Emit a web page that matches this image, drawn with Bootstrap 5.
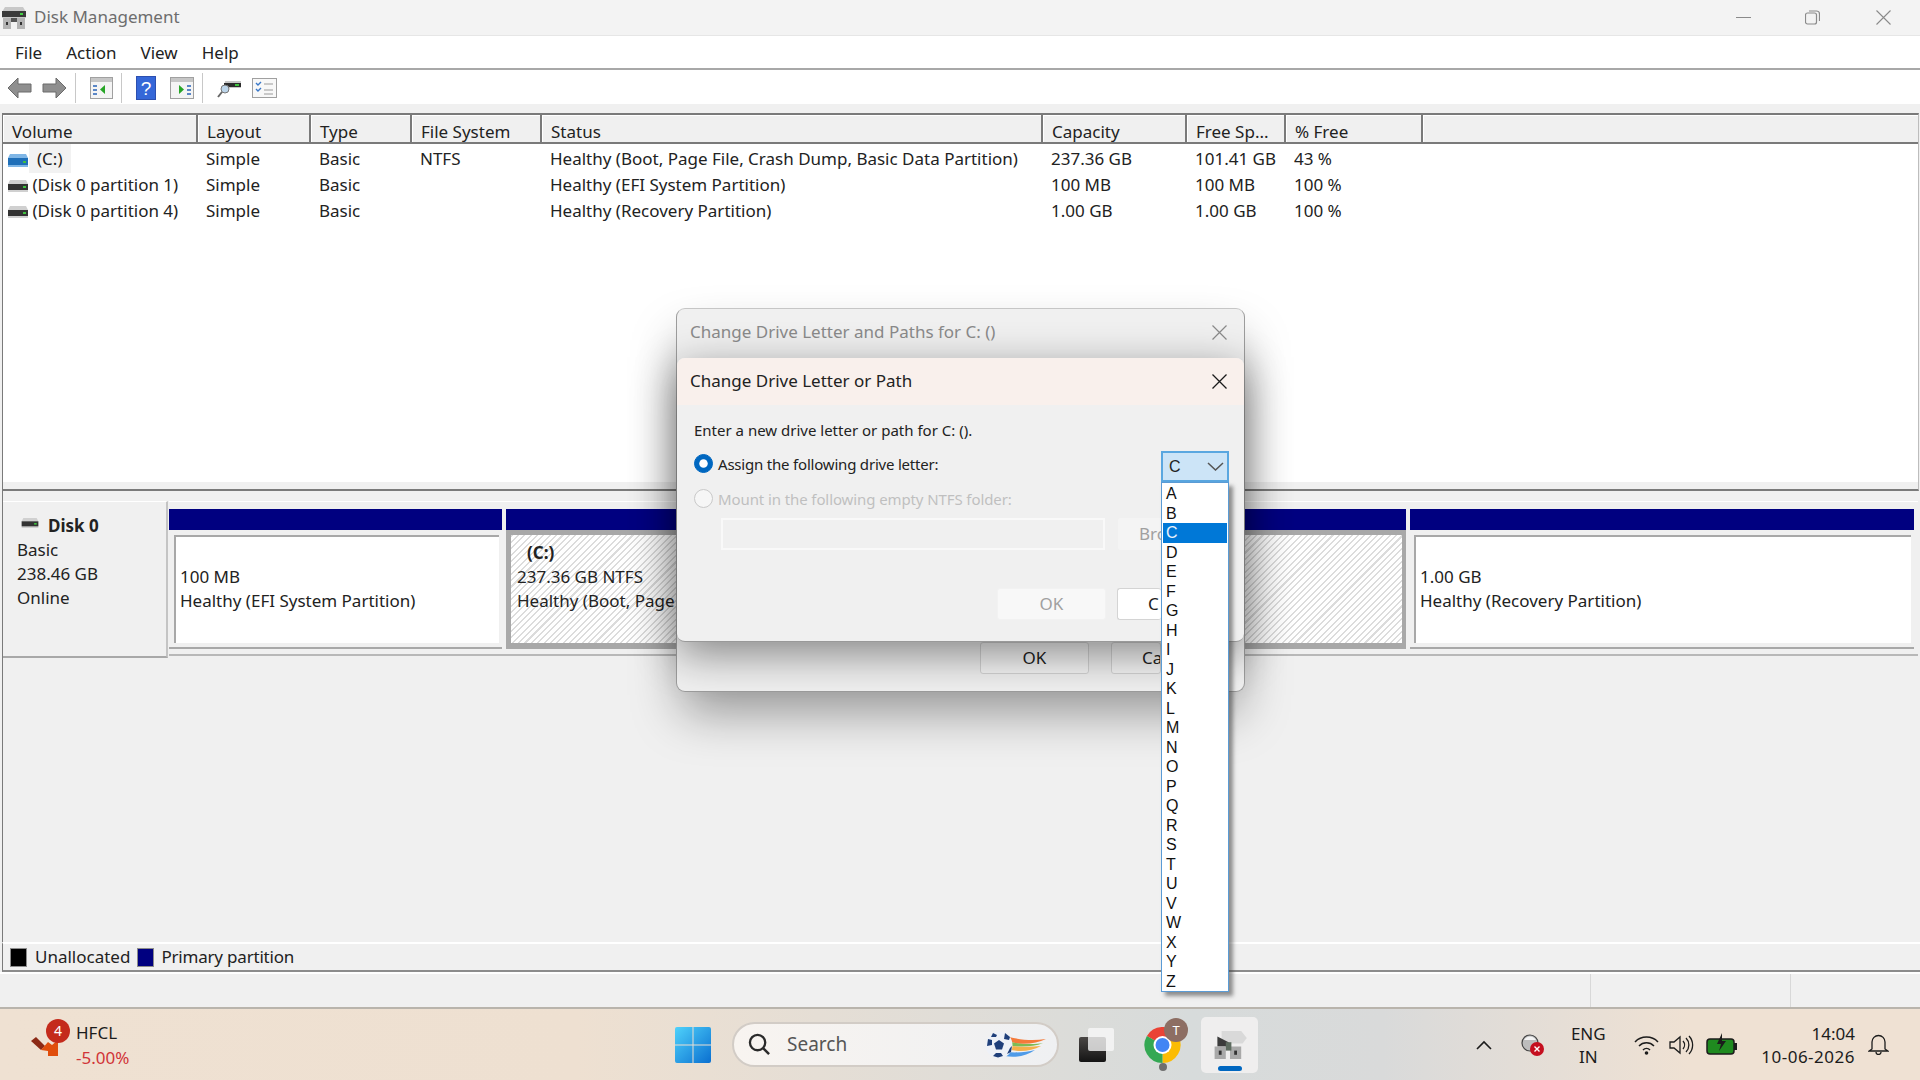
<!DOCTYPE html>
<html lang="en">
<head>
<meta charset="UTF-8">
<title>Disk Management</title>
<link rel="stylesheet" href="https://cdn.jsdelivr.net/npm/bootstrap@5.3.0/dist/css/bootstrap.min.css">
<style>
  html, body { height: 1080px; overflow: hidden; }
  body { font-family: "Noto Sans", "Liberation Sans", sans-serif; font-size: 17px; color: #222; background: #f0f0f0; line-height: 1.2; }
  .mm-title { height: 36px; background: #f3f3f3; border-bottom: 1px solid #e6e6e6; color: #6d6d6d; }
  .mm-title svg.app-ico { margin-left: 2px; margin-right: 8px; }
  .win-ctl { width: 15px; height: 15px; }
  .mm-menu { height: 34px; background: #fff; border-bottom: 2px solid #a8a8a8; padding: 2px 0 0 15px; gap: 24px; }
  .mm-menu .nav-link { padding: 0; color: #222; }
  .mm-tools { height: 34px; background: #fff; padding: 2px 0 0 7px; }
  .tb-sep { width: 1px; height: 30px; background: #c8c8c8; margin-left: 8px; }
  .tb-m10 { margin-left: 10px; } .tb-m14 { margin-left: 14px; }
  .tools-gap { height: 9px; }
  .vol-pane { height: 378px; margin: 0 1px 0 2px; background: #fff; border-top: 2px solid #7a7a7a; border-left: 1px solid #7a7a7a; border-right: 1px solid #bdbdbd; border-bottom: 2px solid #7a7a7a; box-shadow: inset 0 -7px 0 #f0f0f0; }
  .vol-table { table-layout: fixed; width: 100%; margin: 0; --bs-table-bg: transparent; }
  .vol-table th { font-weight: 400; height: 28px; padding: 3px 0 0 9px; background: #f0f0f0; border-right: 2px solid #7a7a7a; border-bottom: 2px solid #7a7a7a; box-shadow: inset 1px 1px 0 #fff; color: #222; }
  .vol-table th:last-child { border-right: 0; }
  .vol-table td { height: 26px; padding: 2px 0 0 9px; color: #222; white-space: nowrap; vertical-align: middle; }
  .vol-table tbody tr:first-child td { height: 28px; padding-top: 4px; }
  .vol-table td:first-child { padding-left: 5px; }
  .c1 { width: 194px; } .c2 { width: 113px; } .c3 { width: 101px; } .c4 { width: 130px; } .c5 { width: 501px; } .c6 { width: 144px; } .c7 { width: 99px; } .c8 { width: 137px; }
  .sel-name { background: #f2f2f2; padding: 3px 8px; margin-left: 1px; }
  .lower-pane { height: 451px; margin-left: 2px; border-left: 1px solid #7a7a7a; padding-top: 10px; }
  .disk-label { width: 165px; height: 157px; background: #f0f0f0; border-top: 1px solid #fff; border-right: 2px solid #c4c4c4; border-bottom: 2px solid #a8a8a8; padding: 12px 0 0 14px; flex: none; }
  .disk-label .lbl-row { height: 24px; line-height: 24px; }
  .lbl-ico { margin: 0 8px 7px 3px; }
  .disk-parts { height: 155px; margin: 0 2px 0 1px; border-top: 1px solid #fff; border-bottom: 2px solid #b8b8b8; padding: 7px 4px 0 0; }
  .part-col { flex: none; margin-right: 4px; }
  .col-efi { width: 333px; } .col-sys { width: 900px; } .col-rec { flex: 1 1 0; margin-right: 0; }
  .col-rec .part-box { padding-left: 4px; }
  .part-bar { height: 21px; background: #000080; }
  .part-box { height: 119px; padding: 5px 3px 0 5px; border-bottom: 2px solid #a8a8a8; }
  .part-box.part-sel { background: #a8a8a8; padding: 5px 4px 0 5px; border-bottom: 0; }
  .part-inner { height: 108px; background: #fff; border-top: 2px solid #a8a8a8; border-left: 2px solid #a8a8a8; padding: 28px 0 0 4px; line-height: 24px; white-space: nowrap; overflow: hidden; }
  .part-hatch { border: 0; padding: 6px 0 0 6px; background: repeating-linear-gradient(135deg, #dcdcdc 0 1.5px, #fff 1.5px 4.5px); }
  .part-hatch b { display: block; padding-left: 10px; }
  .legend-bar { height: 30px; border-top: 2px solid #fff; border-bottom: 2px solid #8c8c8c; margin-left: 2px; border-left: 1px solid #7a7a7a; padding-left: 7px; }
  .legend-bar span { margin-top: 1px; }
  .legend-sq { width: 17px; height: 19px; border: 1px solid #8c8c8c; flex: none; }
  .legend-navy { background: #000080; margin-left: 7px; }
  .legend-tight { letter-spacing: -.2px; margin-left: 7px; }
  .status-strip { height: 37px; border-top: 2px solid #fff; border-bottom: 2px solid #b9b4ac; }
  .status-cell { border-left: 1px solid #d8d8d8; }
  .st-a { width: 200px; } .st-b { width: 130px; }
  /* taskbar */
  .task-bar { height: 71px; background: linear-gradient(90deg, #efe1d2 0, #eee0d1 30%, #d7dbdb 62%, #d9dada 72%, #efe1d3 88%, #efe1d3 100%); }
  .tk-left { width: 675px; padding-left: 30px; flex: none; }
  .tk-check { margin: -14px 10px 0 0; }
  .tk-badge { position: absolute; border-radius: 50%; color: #fff; text-align: center; }
  .tk-badge-red { width: 24px; height: 24px; line-height: 24px; left: 16px; top: -1px; background: #c42b1c; font-size: 14px; }
  .tk-badge-tan { width: 24px; height: 24px; line-height: 24px; left: 20px; top: -9px; background: #8d6e63; font-size: 13px; }
  .tk-name { color: #1c1c1c; line-height: 25px; }
  .tk-loss { color: #d13438; line-height: 25px; }
  .tk-search { width: 327px; height: 45px; margin-left: 21px; background: linear-gradient(90deg, #f8f4f0, #eff0f2); border-radius: 24px; border: 2px solid #d2ccc6; color: #555; padding: 0 10px 0 14px; font-size: 19px; }
  .tk-tile { width: 57px; height: 56px; background: #efeeee; border-radius: 5px; margin-left: 20px; }
  .tk-pill { position: absolute; width: 24px; height: 5px; border-radius: 3px; background: #0067c0; left: 17px; bottom: 2px; }
  .tk-dot { position: absolute; width: 8px; height: 8px; border-radius: 50%; background: #6f6f6f; left: 15px; bottom: -8px; }
  .tray-lang { text-align: center; line-height: 23px; margin-left: 26px; width: 36px; color: #1c1c1c; }
  .tray-clock { text-align: right; line-height: 23px; margin-left: 24px; color: #1c1c1c; }
  .tray-date { letter-spacing: .5px; }
  /* dialogs */
  .dlg-back { position: absolute; left: 676px; top: 308px; width: 569px; height: 384px; background: #f0f0f0; border: 1px solid #9c9c9c; border-top-color: #c6c6c6; border-radius: 9px; box-shadow: 0 26px 50px -6px rgba(0,0,0,.38); }
  .dlg-back-title { height: 48px; padding: 0 13px 2px; color: #8a8a8a; border-radius: 9px 9px 0 0; }
  .dlg-btn { width: 109px; height: 32px; padding: 0; border-radius: 3px; font-size: 17px; color: #222; }
  .dlg-back-btns { position: absolute; left: 303px; top: 333px; gap: 22px; }
  .dlg-back-btns .dlg-btn { background: #f6f6f6; border: 1px solid #d4d4d4; }
  .dlg-back-btns .btn-clip { width: 50px; padding-left: 30px; }
  .btn-clip { text-align: left; white-space: nowrap; overflow: hidden; }
  .dlg-front { position: absolute; left: 0; top: 49px; width: 567px; height: 284px; background: #f0f0f0; border-bottom: 1px solid #999; border-radius: 8px; box-shadow: 0 12px 44px rgba(0,0,0,.45); }
  .dlg-front-title { height: 47px; padding: 0 13px; background: #f9f0ec; border-radius: 8px 8px 0 0; color: #222; }
  .dlg-x { margin-right: 4px; }
  .dlg-front-body { padding: 16px 0 0 17px; font-size: 15px; letter-spacing: -.2px; color: #222; }
  .dlg-intro { letter-spacing: 0; margin-bottom: 15px; }
  .dlg-radio { min-height: 0; padding: 0; margin: 0; }
  .dlg-radio .form-check-input { float: none; width: 19px; height: 19px; margin: 0 5px 0 0; flex: none; background-color: #f6f6f6; border: 1px solid #c9c9c9; }
  .dlg-radio .form-check-input:checked { background-color: #0067c0; border-color: #0067c0; }
  .dlg-radio .form-check-input:disabled { opacity: 1; }
  .dlg-radio .form-check-label { opacity: 1; }
  .lbl-off { color: #909090 !important; letter-spacing: -.1px; }
  .combo-box { position: absolute; left: 484px; top: 93px; width: 68px; height: 31px; background: #cce4f7; border: 2px solid #5aa7e0; font-family: "Liberation Sans", sans-serif; font-size: 16px; letter-spacing: 0; padding: 0 3px 0 6px; }
  .combo-list { position: absolute; left: 484px; top: 124px; width: 68px; height: 510px; min-width: 0; padding: 1px 1px; margin: 0; background: #fff; border: 1px solid #5a9bd5; border-radius: 0; box-shadow: 4px 4px 4px rgba(60,60,60,.55); font-family: "Liberation Sans", sans-serif; font-size: 16px; letter-spacing: 0; }
  .combo-list .dropdown-item { height: 19.5px; line-height: 19.5px; padding: 0 0 0 3px; color: #111; }
  .combo-list .dropdown-item.active { background: #0078d7; color: #e8f2fb; }
  .folder-row { margin: 10px 0 0 27px; gap: 13px; }
  .folder-input { width: 384px; height: 32px; flex: none; background: #f0f0f0 !important; border: 2px solid #f9f9f9; border-radius: 0; }
  .btn-browse { width: 43px; height: 32px; padding: 0 0 0 21px; border: 0; font-size: 17px; letter-spacing: 0; border-radius: 3px 0 0 3px; text-align: left; white-space: nowrap; overflow: hidden; }
  .btn-browse:disabled { background: #f4f4f4; color: #a0a0a0; opacity: 1; }
  .dlg-front-btns { margin: 38px 0 0 303px; gap: 11px; }
  .btn-okoff:disabled { background: #f8f8f8; border: 1px solid #f2f2f2; color: #a0a0a0; letter-spacing: 0; opacity: 1; }
  .btn-cancel { width: 44px; padding-left: 30px; background: #fff; border: 1px solid #d4d4d4; border-right: 0; letter-spacing: 0; }
</style>
</head>
<body>
<svg width="0" height="0" class="position-absolute">
  <symbol id="disk-gray" viewBox="0 0 20 12"><path d="M2 0h16l2 4v8H0V4z" fill="#d0d0d0"/><rect y="4" width="20" height="6" fill="#333"/><rect x="15" y="6" width="3" height="2" fill="#3fc23f"/></symbol>
  <symbol id="disk-blue" viewBox="0 0 20 13"><path d="M2 0h16l2 4v9H0V4z" fill="#7fb6e6"/><rect y="4" width="20" height="7" fill="#1f6fb8"/><rect x="15" y="7" width="3" height="2" fill="#3fc23f"/></symbol>
  <symbol id="app-mgr" viewBox="0 0 24 22"><path d="M3 0h18l3 5v6H0V5z" fill="#c8c8c8"/><rect x="0" y="4" width="24" height="6" fill="#3a3a3a"/><rect x="18" y="6" width="3" height="2" fill="#43d043"/><path d="M1 11h8v11H1zM15 11h8v11h-8z" fill="#b4b4b4"/><path d="M9 11h6v4H9z" fill="#555"/><rect x="4" y="15" width="2" height="3" fill="#333"/><rect x="18" y="15" width="2" height="3" fill="#333"/></symbol>
</svg>

<header class="mm-title d-flex align-items-center">
  <svg class="app-ico" width="24" height="22"><use href="#app-mgr"/></svg>
  <span>Disk Management</span>
  <div class="ms-auto d-flex align-items-center">
    <svg class="win-ctl" viewBox="0 0 15 15"><path d="M0 7.5h15" stroke="#8a8a8a" stroke-width="1"/></svg>
    <svg class="win-ctl" viewBox="0 0 15 15" style="margin-left:54px"><rect x=".5" y="3" width="11" height="11" rx="2" fill="none" stroke="#8a8a8a" stroke-width="1.2"/><path d="M4 1h7.5a3 3 0 0 1 3 3v7" fill="none" stroke="#8a8a8a" stroke-width="1.2"/></svg>
    <svg class="win-ctl" viewBox="0 0 15 15" style="margin:0 29px 0 56px"><path d="M.5.5l14 14M14.5.5l-14 14" stroke="#8a8a8a" stroke-width="1.1"/></svg>
  </div>
</header>

<nav class="mm-menu nav align-items-center">
  <a class="nav-link" href="#">File</a>
  <a class="nav-link" href="#">Action</a>
  <a class="nav-link" href="#">View</a>
  <a class="nav-link" href="#">Help</a>
</nav>

<div class="mm-tools d-flex align-items-center">
  <svg width="25" height="22" viewBox="0 0 25 22"><path d="M11 1L1 11l10 10v-6h13V7H11z" fill="#8f8f8f" stroke="#6a6a6a"/></svg>
  <svg class="tb-m10" width="25" height="22" viewBox="0 0 25 22"><path d="M14 1l10 10-10 10v-6H1V7h13z" fill="#8f8f8f" stroke="#6a6a6a"/></svg>
  <span class="tb-sep"></span>
  <svg class="tb-m14" width="23" height="22" viewBox="0 0 23 22"><rect x=".5" y=".5" width="22" height="21" fill="#f4f4f4" stroke="#a0a0a0"/><rect x="1" y="1" width="21" height="4" fill="#c6c6c6"/><path d="M3 8h4v2H3zM3 12h4v2H3zM3 16h4v2H3z" fill="#5a86c6"/><path d="M15 8v9l-5-4.500z" fill="#27a527"/></svg>
  <span class="tb-sep"></span>
  <svg class="tb-m14" width="20" height="24" viewBox="0 0 20 24"><rect width="20" height="24" fill="#2c4fb0"/><rect x="1" y="1" width="18" height="22" fill="#3567d8"/><text x="10" y="19" font-size="19" font-family="Liberation Sans" fill="#fff" text-anchor="middle">?</text></svg>
  <svg class="tb-m14" width="24" height="22" viewBox="0 0 24 22"><rect x=".5" y=".5" width="23" height="21" fill="#f4f4f4" stroke="#a0a0a0"/><rect x="1" y="1" width="22" height="4" fill="#c6c6c6"/><path d="M17 8h4v2h-4zM17 12h4v2h-4zM17 16h4v2h-4z" fill="#5a86c6"/><path d="M9 8v9l5-4.500z" fill="#27a527"/></svg>
  <span class="tb-sep"></span>
  <svg class="tb-m14" width="25" height="22" viewBox="0 0 25 22"><path d="M8 4h16v7H7z" fill="#c7c7c7"/><rect x="7" y="6" width="17" height="4" fill="#2c2c2c"/><rect x="18" y="7" width="4" height="2" fill="#3fc23f"/><circle cx="8" cy="12" r="4" fill="#bcd5ea" stroke="#777"/><path d="M5 15l-4 5" stroke="#666" stroke-width="2"/></svg>
  <svg class="tb-m10" width="25" height="20" viewBox="0 0 25 20"><rect x=".5" y=".5" width="24" height="19" fill="#f8f8f8" stroke="#a0a0a0"/><path d="M4 5l2 2 3-3M4 11l2 2 3-3" fill="none" stroke="#3a78c8" stroke-width="1.400"/><path d="M12 6h9M12 12h9M12 16h9" stroke="#9a9a9a"/></svg>
</div>
<div class="tools-gap"></div>

<section class="vol-pane">
  <table class="table table-borderless vol-table">
    <colgroup><col class="c1"><col class="c2"><col class="c3"><col class="c4"><col class="c5"><col class="c6"><col class="c7"><col class="c8"><col></colgroup>
    <thead>
      <tr><th>Volume</th><th>Layout</th><th>Type</th><th>File System</th><th>Status</th><th>Capacity</th><th>Free Sp...</th><th>% Free</th><th></th></tr>
    </thead>
    <tbody>
      <tr><td><svg width="20" height="13"><use href="#disk-blue"/></svg><span class="sel-name">(C:)</span></td><td>Simple</td><td>Basic</td><td>NTFS</td><td>Healthy (Boot, Page File, Crash Dump, Basic Data Partition)</td><td>237.36 GB</td><td>101.41 GB</td><td>43 %</td><td></td></tr>
      <tr><td><svg width="20" height="12"><use href="#disk-gray"/></svg> (Disk 0 partition 1)</td><td>Simple</td><td>Basic</td><td></td><td>Healthy (EFI System Partition)</td><td>100 MB</td><td>100 MB</td><td>100 %</td><td></td></tr>
      <tr><td><svg width="20" height="12"><use href="#disk-gray"/></svg> (Disk 0 partition 4)</td><td>Simple</td><td>Basic</td><td></td><td>Healthy (Recovery Partition)</td><td>1.00 GB</td><td>1.00 GB</td><td>100 %</td><td></td></tr>
    </tbody>
  </table>
</section>

<section class="lower-pane d-flex align-items-start">
  <div class="disk-label">
    <div class="lbl-row d-flex align-items-center"><svg class="lbl-ico" width="20" height="10"><use href="#disk-gray"/></svg><b>Disk 0</b></div>
    <div class="lbl-row">Basic</div>
    <div class="lbl-row">238.46 GB</div>
    <div class="lbl-row">Online</div>
  </div>
  <div class="disk-parts d-flex flex-grow-1">
    <div class="part-col col-efi">
      <div class="part-bar"></div>
      <div class="part-box"><div class="part-inner">100 MB<br>Healthy (EFI System Partition)</div></div>
    </div>
    <div class="part-col col-sys">
      <div class="part-bar"></div>
      <div class="part-box part-sel"><div class="part-inner part-hatch"><b>(C:)</b>237.36 GB NTFS<br>Healthy (Boot, Page</div></div>
    </div>
    <div class="part-col col-rec">
      <div class="part-bar"></div>
      <div class="part-box"><div class="part-inner">1.00 GB<br>Healthy (Recovery Partition)</div></div>
    </div>
  </div>
</section>

<div class="legend-bar d-flex align-items-center">
  <span class="legend-sq bg-black"></span><span class="ms-2">Unallocated</span>
  <span class="legend-sq legend-navy"></span><span class="legend-tight">Primary partition</span>
</div>

<div class="status-strip d-flex justify-content-end">
  <div class="status-cell st-a"></div>
  <div class="status-cell st-b"></div>
</div>

<footer class="task-bar d-flex align-items-center">
  <div class="tk-left d-flex align-items-center">
    <div class="position-relative tk-check">
      <svg class="d-block" width="36" height="36" viewBox="0 0 36 36"><path d="M1 21l5-4 9 9-4 4z" fill="#8c2a16"/><path d="M11 30l7-8 4 3 6-5v16H18v-5z" fill="#e04e0c"/></svg>
      <span class="tk-badge tk-badge-red">4</span>
    </div>
    <div><div class="tk-name">HFCL</div><div class="tk-loss">-5.00%</div></div>
  </div>
  <svg width="36" height="36" viewBox="0 0 36 36">
    <defs><linearGradient id="win" x1="0" y1="0" x2="1" y2="1"><stop offset="0" stop-color="#4fd2fb"/><stop offset="1" stop-color="#0a6fd0"/></linearGradient></defs>
    <path d="M2 0h15.500v17.500H0V2a2 2 0 0 1 2-2zM18.500 0H34a2 2 0 0 1 2 2v15.500H18.500zM0 18.500h17.500V36H2a2 2 0 0 1-2-2zM18.500 18.500H36V34a2 2 0 0 1-2 2H18.500z" fill="url(#win)"/>
  </svg>
  <div class="tk-search d-flex align-items-center">
    <svg class="me-2" width="23" height="23" viewBox="0 0 24 24"><circle cx="10" cy="10" r="8" fill="none" stroke="#2a2a2a" stroke-width="2.400"/><path d="M16 16l6 6" stroke="#2a2a2a" stroke-width="2.600"/></svg>
    <span class="ms-2">Search</span>
    <svg class="ms-auto" width="62" height="28" viewBox="0 0 62 28">
      <path d="M24 6c12 3 24 4 37 2-10 5-24 6-36 3z" fill="#f47a3a"/>
      <path d="M26 11c10 2 22 3 32 1-9 4-22 4-32 3z" fill="#7dbb55"/>
      <path d="M26 15c10 1 20 1 30 0-9 5-20 6-30 4z" fill="#f5b04a"/>
      <path d="M22 21c10 1 20 0 28-2-8 6-20 8-30 6z" fill="#4f9be8"/>
      <circle cx="14" cy="14" r="13.500" fill="#eef1f7"/>
      <path d="M14 9l5 3.500-2 6h-6l-2-6z" fill="#1f3f7a"/>
      <path d="M3 8l4 1 0 5-5 1zM20 2l5 4-1 3-5-1zM8 2l4 2-1 2-5 0zM25 17l2-2-1 6-4 2zM8 25l3-3h5l2 3-5 1.500z" fill="#1f3f7a"/>
    </svg>
  </div>
  <svg style="margin-left:20px" width="36" height="34" viewBox="0 0 36 34"><defs><linearGradient id="tkd" x1="0" y1="0" x2="0" y2="1"><stop offset="0" stop-color="#4a4745"/><stop offset="1" stop-color="#141414"/></linearGradient></defs><rect x="0" y="9" width="27" height="25" rx="2" fill="url(#tkd)"/><rect x="9" y="0" width="26" height="23" rx="2" fill="#f8f8f8" fill-opacity=".78"/></svg>
  <div class="position-relative" style="margin-left:29px">
    <svg class="d-block" width="37" height="36" viewBox="0 0 36 36"><path d="M18 18L2.400 9A18 18 0 0 1 33.600 9z" fill="#ea4335"/><path d="M18 18L33.600 9A18 18 0 0 1 18 36z" fill="#fbbc04"/><path d="M18 18L18 36A18 18 0 0 1 2.400 9z" fill="#34a853"/><circle cx="18" cy="18" r="9" fill="#fff"/><circle cx="18" cy="18" r="7" fill="#4285f4"/></svg>
    <span class="tk-badge tk-badge-tan">T</span>
    <span class="tk-dot"></span>
  </div>
  <div class="tk-tile position-relative d-flex align-items-center justify-content-center">
    <svg width="36" height="28" viewBox="0 0 24 20"><path d="M6 0h14l4 5-3 4H6z" fill="#d9d9d9"/><path d="M3 4l8 4v3H3z" fill="#3b3b3b"/><path d="M1 11h8v9H1zM12 11h8v9h-8z" fill="#a9a9a9"/><path d="M9 8h4v6H9z" fill="#5d6b5f"/><rect x="4" y="14" width="2" height="3" fill="#333"/><rect x="15" y="14" width="2" height="3" fill="#333"/></svg>
    <span class="tk-pill"></span>
  </div>
  <svg class="ms-auto" width="16" height="10" viewBox="0 0 16 10"><path d="M1 9l7-7 7 7" fill="none" stroke="#1c1c1c" stroke-width="1.600"/></svg>
  <svg style="margin-left:28px" width="24" height="22" viewBox="0 0 24 22"><circle cx="10" cy="9" r="8" fill="#bdbdbd" stroke="#444" stroke-width="1.200"/><path d="M4 6a7 7 0 0 1 12 0" fill="#f4f4f4"/><circle cx="17" cy="15" r="7" fill="#c50f1f"/><path d="M14.500 12.500l5 5M19.500 12.500l-5 5" stroke="#fff" stroke-width="1.400"/></svg>
  <div class="tray-lang">ENG<br>IN</div>
  <svg style="margin-left:28px" width="25" height="20" viewBox="0 0 25 20"><path d="M1 7a16 16 0 0 1 23 0M5 11a10.500 10.500 0 0 1 15 0M9 15a5 5 0 0 1 7 0" fill="none" stroke="#1c1c1c" stroke-width="1.500"/><circle cx="12.500" cy="18" r="1.800" fill="#1c1c1c"/></svg>
  <svg class="tb-m10" width="25" height="22" viewBox="0 0 25 22"><path d="M1 8h4l6-5v16l-6-5H1z" fill="none" stroke="#1c1c1c" stroke-width="1.300"/><path d="M14 7a6 6 0 0 1 0 8M17 4a10 10 0 0 1 0 14M20 2a13 13 0 0 1 0 18" fill="none" stroke="#1c1c1c" stroke-width="1.300"/></svg>
  <svg style="margin-left:12px" width="31" height="24" viewBox="0 0 31 24"><rect x="1" y="6" width="27" height="15" rx="3" fill="#1f8a1f" stroke="#1c1c1c" stroke-width="1.500"/><rect x="28" y="10" width="3" height="7" fill="#1c1c1c"/><path d="M16 0l-5 11h4l-2 7 7-10h-4z" fill="#1c1c1c"/></svg>
  <div class="tray-clock">14:04<br><span class="tray-date">10-06-2026</span></div>
  <svg style="margin:0 31px 0 13px" width="21" height="21" viewBox="0 0 21 21"><path d="M4 15V8a6.500 6.500 0 0 1 13 0v7l3 2H1zM8 18a2.500 2.500 0 0 0 5 0" fill="none" stroke="#1c1c1c" stroke-width="1.300"/></svg>
</footer>

<div class="dlg-back">
  <div class="dlg-back-title d-flex align-items-center justify-content-between">
    <span>Change Drive Letter and Paths for C: ()</span>
    <svg class="dlg-x" width="15" height="15" viewBox="0 0 15 15"><path d="M.5.5l14 14M14.500.5l-14 14" stroke="#8a8a8a" stroke-width="1.200"/></svg>
  </div>
  <div class="dlg-back-btns d-flex">
    <button class="btn dlg-btn">OK</button>
    <button class="btn dlg-btn btn-clip">Ca</button>
  </div>
  <div class="dlg-front">
    <div class="dlg-front-title d-flex align-items-center justify-content-between">
      <span>Change Drive Letter or Path</span>
      <svg class="dlg-x" width="15" height="15" viewBox="0 0 15 15"><path d="M.5.5l14 14M14.500.5l-14 14" stroke="#1a1a1a" stroke-width="1.300"/></svg>
    </div>
    <div class="dlg-front-body">
      <div class="dlg-intro">Enter a new drive letter or path for C: ().</div>
      <div class="form-check dlg-radio d-flex align-items-center mb-3">
        <input class="form-check-input" type="radio" name="mode" id="r1" checked>
        <label class="form-check-label" for="r1">Assign the following drive letter:</label>
      </div>
      <div class="form-check dlg-radio d-flex align-items-center">
        <input class="form-check-input" type="radio" name="mode" id="r2" disabled>
        <label class="form-check-label lbl-off" for="r2">Mount in the following empty NTFS folder:</label>
      </div>
      <div class="folder-row d-flex">
        <input class="form-control folder-input" type="text" disabled>
        <button class="btn btn-browse" disabled>Bro</button>
      </div>
      <div class="dlg-front-btns d-flex">
        <button class="btn dlg-btn btn-okoff" disabled>OK</button>
        <button class="btn dlg-btn btn-cancel btn-clip">C</button>
      </div>
    </div>
    <div class="combo-box d-flex align-items-center justify-content-between">
      <span>C</span>
      <svg width="17" height="9" viewBox="0 0 17 9"><path d="M1 1l7.500 7L16 1" fill="none" stroke="#555" stroke-width="1.500"/></svg>
    </div>
    <ul class="dropdown-menu show combo-list">
      <li><a class="dropdown-item" href="#">A</a></li>
      <li><a class="dropdown-item" href="#">B</a></li>
      <li><a class="dropdown-item active" href="#">C</a></li>
      <li><a class="dropdown-item" href="#">D</a></li>
      <li><a class="dropdown-item" href="#">E</a></li>
      <li><a class="dropdown-item" href="#">F</a></li>
      <li><a class="dropdown-item" href="#">G</a></li>
      <li><a class="dropdown-item" href="#">H</a></li>
      <li><a class="dropdown-item" href="#">I</a></li>
      <li><a class="dropdown-item" href="#">J</a></li>
      <li><a class="dropdown-item" href="#">K</a></li>
      <li><a class="dropdown-item" href="#">L</a></li>
      <li><a class="dropdown-item" href="#">M</a></li>
      <li><a class="dropdown-item" href="#">N</a></li>
      <li><a class="dropdown-item" href="#">O</a></li>
      <li><a class="dropdown-item" href="#">P</a></li>
      <li><a class="dropdown-item" href="#">Q</a></li>
      <li><a class="dropdown-item" href="#">R</a></li>
      <li><a class="dropdown-item" href="#">S</a></li>
      <li><a class="dropdown-item" href="#">T</a></li>
      <li><a class="dropdown-item" href="#">U</a></li>
      <li><a class="dropdown-item" href="#">V</a></li>
      <li><a class="dropdown-item" href="#">W</a></li>
      <li><a class="dropdown-item" href="#">X</a></li>
      <li><a class="dropdown-item" href="#">Y</a></li>
      <li><a class="dropdown-item" href="#">Z</a></li>
    </ul>
  </div>
</div>

<script src="https://cdn.jsdelivr.net/npm/bootstrap@5.3.0/dist/js/bootstrap.bundle.min.js"></script>
</body>
</html>
